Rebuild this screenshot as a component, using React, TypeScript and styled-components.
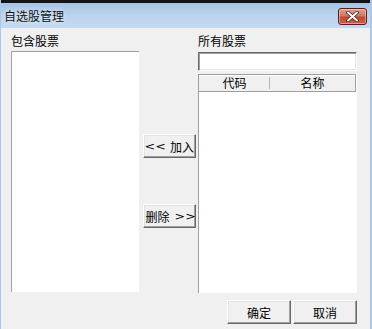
import styled, { createGlobalStyle } from 'styled-components';

const GlobalStyle = createGlobalStyle`
	html, body {
		margin: 0;
		padding: 0;
		background: #000;
	}
	body {
		font-family: "Noto Sans CJK SC", "DejaVu Sans", sans-serif;
		font-size: 12px;
		color: #000;
	}
`;

const Window = styled.div`
	width: 372px;
	height: 329px;
	box-sizing: border-box;
	display: flex;
	flex-direction: column;
	background: #f0f0f0;
	border-left: 1px solid #a9c8ea;
	border-right: 2px solid #a9c8ea;
	overflow: hidden;
`;

const TitleBar = styled.div`
	height: 28px;
	box-sizing: border-box;
	border-top: 3px solid #141414;
	background: linear-gradient(to bottom, #a6c3e4 0%, #bcd3ee 50%, #c5daf1 100%);
	display: flex;
	align-items: center;
	justify-content: space-between;
	padding: 0 5px 0 4px;
	margin-left: -1px;
	margin-right: -2px;
`;

const Title = styled.span`
	font-size: 12px;
	line-height: 14px;
	color: #111;
	text-shadow: 0 0 4px rgba(255, 255, 255, 0.9);
	margin-top: 1px;
`;

const CloseButton = styled.div`
	width: 29px;
	height: 17px;
	box-sizing: border-box;
	margin-top: 2px;
	border: 1px solid #5a1c1c;
	border-radius: 3px;
	background: linear-gradient(to bottom, #e2a090 0%, #d27660 45%, #c04a32 55%, #c8604a 100%);
	box-shadow: inset 0 0 0 1px rgba(255, 220, 210, 0.5);
	display: flex;
	align-items: center;
	justify-content: center;
`;

const Content = styled.div`
	display: flex;
	padding: 5px 13px 0 10px;
`;

const Column = styled.div<{ $width: number }>`
	width: ${(p) => p.$width}px;
	display: flex;
	flex-direction: column;
`;

const Label = styled.div`
	height: 16px;
	line-height: 16px;
	margin-bottom: 2px;
	white-space: nowrap;
`;

const ListBox = styled.div`
	height: 241px;
	box-sizing: border-box;
	background: #fff;
	border-top: 1px solid #a0a0a0;
	border-left: 1px solid #a0a0a0;
`;

const Middle = styled.div`
	width: 59px;
	display: flex;
	flex-direction: column;
	gap: 46px;
	padding: 101px 0 0 4px;
	box-sizing: border-box;
`;

const Button = styled.div<{ $width: number }>`
	width: ${(p) => p.$width}px;
	height: 24px;
	box-sizing: border-box;
	background: #f0f0f0;
	border-top: 1px solid #fff;
	border-left: 1px solid #fff;
	border-right: 1px solid #696969;
	border-bottom: 1px solid #696969;
	box-shadow: inset -1px -1px 0 #a0a0a0, inset 1px 1px 0 #e3e3e3;
	display: flex;
	align-items: center;
	justify-content: center;
	gap: 6px;
	white-space: nowrap;
	font-size: 12px;
`;

const Arrows = styled.span`
	font-family: "DejaVu Sans", sans-serif;
	font-size: 11px;
	letter-spacing: 0px;
	transform: scaleX(1.15);
`;

const Input = styled.div`
	height: 19px;
	box-sizing: border-box;
	background: #fff;
	border-top: 1px solid #696969;
	border-left: 1px solid #696969;
	border-right: 1px solid #fff;
	border-bottom: 1px solid #fff;
	box-shadow: inset 1px 1px 0 #a0a0a0, inset -1px -1px 0 #e3e3e3;
	margin-bottom: 3px;
	margin-top: 1px;
`;

const Grid = styled.div`
	height: 219px;
	box-sizing: border-box;
	background: #fff;
	border-left: 1px solid #a0a0a0;
	display: flex;
	flex-direction: column;
`;

const Header = styled.div`
	height: 18px;
	box-sizing: border-box;
	display: flex;
	background: #f0f0f0;
	border: 1px solid #a0a0a0;
	border-left: none;
	margin-right: 1px;
	box-shadow: inset 0 1px 0 #fff;
`;

const HeaderCell = styled.div<{ $width: number; $divider?: boolean }>`
	width: ${(p) => p.$width}px;
	display: flex;
	align-items: center;
	justify-content: center;
	line-height: 14px;
	position: relative;
	${(p) =>
		p.$divider &&
		`
		&::after {
			content: '';
			position: absolute;
			right: 0;
			top: 2px;
			bottom: 2px;
			width: 1px;
			background: #b8b8b8;
		}
	`}
`;

const Footer = styled.div`
	display: flex;
	justify-content: flex-end;
	gap: 2px;
	padding: 7px 13px 0 0;
`;

function App() {
	return (
		<>
			<GlobalStyle />
			<Window>
				<TitleBar>
					<Title>自选股管理</Title>
					<CloseButton>
						<svg width="13" height="11" viewBox="0 0 13 11">
							<path
								d="M2 1.5 L11 9.5 M11 1.5 L2 9.5"
								stroke="#4a2020"
								strokeWidth="3.6"
								strokeLinecap="round"
							/>
							<path
								d="M2 1.5 L11 9.5 M11 1.5 L2 9.5"
								stroke="#ffffff"
								strokeWidth="2"
								strokeLinecap="round"
							/>
						</svg>
					</CloseButton>
				</TitleBar>
				<Content>
					<Column $width={129}>
						<Label>包含股票</Label>
						<ListBox />
					</Column>
					<Middle>
						<Button $width={53}>
							<Arrows>&lt;&lt;</Arrows>
							<span>加入</span>
						</Button>
						<Button $width={53}>
							<span>删除</span>
							<Arrows>&gt;&gt;</Arrows>
						</Button>
					</Middle>
					<Column $width={159}>
						<Label>所有股票</Label>
						<Input />
						<Grid>
							<Header>
								<HeaderCell $width={72} $divider>
									代码
								</HeaderCell>
								<HeaderCell $width={86}>名称</HeaderCell>
							</Header>
						</Grid>
					</Column>
				</Content>
				<Footer>
					<Button $width={64}>确定</Button>
					<Button $width={64}>取消</Button>
				</Footer>
			</Window>
		</>
	);
}

export default App;
